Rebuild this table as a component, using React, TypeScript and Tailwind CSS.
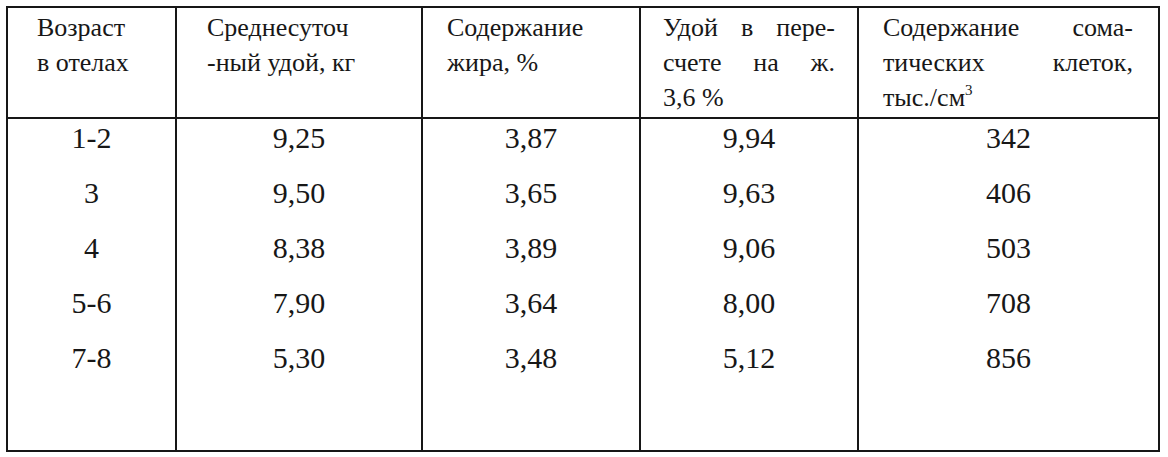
const rows = [
  ['1-2', '9,25', '3,87', '9,94', '342'],
  ['3', '9,50', '3,65', '9,63', '406'],
  ['4', '8,38', '3,89', '9,06', '503'],
  ['5-6', '7,90', '3,64', '8,00', '708'],
  ['7-8', '5,30', '3,48', '5,12', '856'],
];

const widths = ['w-[169px]', 'w-[246px]', 'w-[218px]', 'w-[218px]', 'w-[299px]'];

// justified header line: words spread across the full cell width
function Spread({ words }: { words: string[] }) {
  return (
    <div className="flex justify-between">
      {words.map((w, i) => (
        <span key={i}>{w}</span>
      ))}
    </div>
  );
}

export default function App() {
  return (
    <div className="font-[Liberation_Serif] w-[1168px] h-[457px] bg-white pt-[6px] pl-[6px] text-neutral-900">
      <div className="w-[1154px] h-[446px] border-2 border-neutral-900 flex flex-col">
        <div className="flex h-[111px] border-b-2 border-neutral-900 text-[26px] leading-[35px]">
          <div className={`${widths[0]} border-r-2 border-neutral-900 pl-[29px] pt-[2px]`}>
            <div>Возраст</div>
            <div>в отелах</div>
          </div>
          <div className={`${widths[1]} border-r-2 border-neutral-900 pl-[30px] pt-[2px]`}>
            <div>Среднесуточ</div>
            <div>-ный удой, кг</div>
          </div>
          <div className={`${widths[2]} border-r-2 border-neutral-900 pl-[24px] pt-[2px]`}>
            <div>Содержание</div>
            <div>жира, %</div>
          </div>
          <div className={`${widths[3]} border-r-2 border-neutral-900 pl-[22px] pr-[22px] pt-[2px]`}>
            <Spread words={['Удой', 'в', 'пере-']} />
            <Spread words={['счете', 'на', 'ж.']} />
            <div>3,6 %</div>
          </div>
          <div className={`${widths[4]} pl-[24px] pr-[25px] pt-[2px]`}>
            <Spread words={['Содержание', 'сома-']} />
            <Spread words={['тических', 'клеток,']} />
            <div>
              тыс./см<span className="relative -top-[11px] text-[15px]">3</span>
            </div>
          </div>
        </div>
        <div className="flex flex-1 text-[30px] leading-[36px]">
          {widths.map((w, c) => (
            <div
              key={c}
              className={`${w} ${c < 4 ? 'border-r-2 border-neutral-900' : ''} flex flex-col items-center gap-[19px] pt-[1px]`}
            >
              {rows.map((r, i) => (
                <div key={i}>{r[c]}</div>
              ))}
            </div>
          ))}
        </div>
      </div>
    </div>
  );
}
